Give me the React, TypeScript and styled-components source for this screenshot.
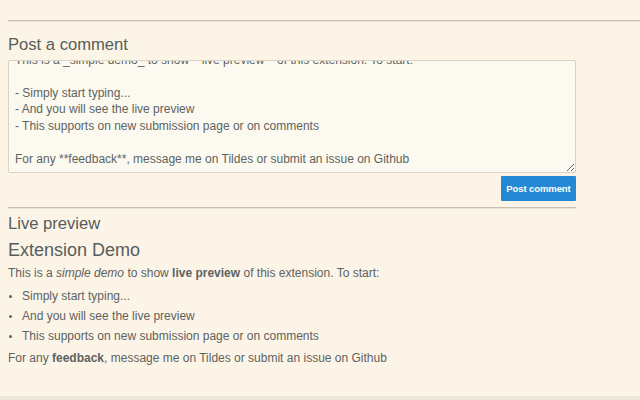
import { useEffect, useRef } from "react";
import styled, { createGlobalStyle } from "styled-components";

const GlobalStyle = createGlobalStyle`
  html, body {
    margin: 0;
    padding: 0;
    background: #ece8d8;
  }
  body {
    font-family: "Liberation Sans", Arial, sans-serif;
    color: #5c6360;
  }
`;

const draft = `This is a _simple demo_ to show **live preview** of this extension. To start:

- Simply start typing...
- And you will see the live preview
- This supports on new submission page or on comments

For any **feedback**, message me on Tildes or submit an issue on Github`;

const Page = styled.div`
  height: 396px;
  background: #fdf4e8;
  padding: 20px 0 0 8px;
  box-sizing: border-box;
  overflow: hidden;
`;

const TopRule = styled.div`
  border-top: 1px solid #c6bfb0;
  height: 1px;
  background: #ece4d4;
`;

const Column = styled.div`
  width: 568px;
  display: flex;
  flex-direction: column;
`;

const Heading = styled.h2<{ $size?: number; $top: number }>`
  margin: ${(p) => p.$top}px 0 0;
  font-size: ${(p) => p.$size ?? 16.6}px;
  line-height: ${(p) => (p.$size ?? 16.6) + 4}px;
  font-weight: 400;
  color: #565d5a;
`;

const Editor = styled.textarea`
  margin-top: 4px;
  height: 113px;
  box-sizing: border-box;
  padding: 6px 6px 4px;
  border: 1px solid #d9d3c4;
  border-radius: 2px;
  background: #fcfaf0;
  color: #5c6360;
  font-family: "Liberation Sans", Arial, sans-serif;
  font-size: 12px;
  line-height: 16.5px;
  overflow: hidden;
  resize: vertical;
  outline: none;
`;

const Actions = styled.div`
  display: flex;
  justify-content: flex-end;
  margin-top: 3px;
`;

const SubmitButton = styled.button`
  height: 25px;
  width: 75px;
  padding: 0;
  border: none;
  border-radius: 1px;
  background: #2588d4;
  color: #ffffff;
  font-family: "Liberation Sans", Arial, sans-serif;
  font-weight: 700;
  font-size: 9.5px;
  letter-spacing: -0.1px;
`;

const Rule = styled.hr`
  margin: 6px 0 0;
  border: none;
  border-top: 1px solid #c6bfb0;
  height: 1px;
  background: #ebe5d6;
`;

const Text = styled.p<{ $top: number }>`
  margin: ${(p) => p.$top}px 0 0;
  font-size: 12px;
  line-height: 16px;
`;

const List = styled.ul`
  margin: 7px 0 0;
  padding-left: 14px;
  display: flex;
  flex-direction: column;
  gap: 4px;
`;

const Item = styled.li`
  font-size: 12px;
  line-height: 16px;
  &::marker {
    font-size: 10px;
  }
`;

export default function App() {
  const editorRef = useRef<HTMLTextAreaElement>(null);

  useEffect(() => {
    const el = editorRef.current;
    if (el) el.scrollTop = el.scrollHeight;
  }, []);

  return (
    <>
      <GlobalStyle />
      <Page>
        <TopRule />
        <Column>
          <Heading $top={13}>Post a comment</Heading>
          <Editor ref={editorRef} defaultValue={draft} />
          <Actions>
            <SubmitButton>Post comment</SubmitButton>
          </Actions>
          <Rule />
          <Heading $top={5}>Live preview</Heading>
          <Heading $top={5} $size={18}>
            Extension Demo
          </Heading>
          <Text $top={4}>
            This is a <em>simple demo</em> to show <strong>live preview</strong> of
            this extension. To start:
          </Text>
          <List>
            <Item>Simply start typing...</Item>
            <Item>And you will see the live preview</Item>
            <Item>This supports on new submission page or on comments</Item>
          </List>
          <Text $top={6}>
            For any <strong>feedback</strong>, message me on Tildes or submit an
            issue on Github
          </Text>
        </Column>
      </Page>
    </>
  );
}
